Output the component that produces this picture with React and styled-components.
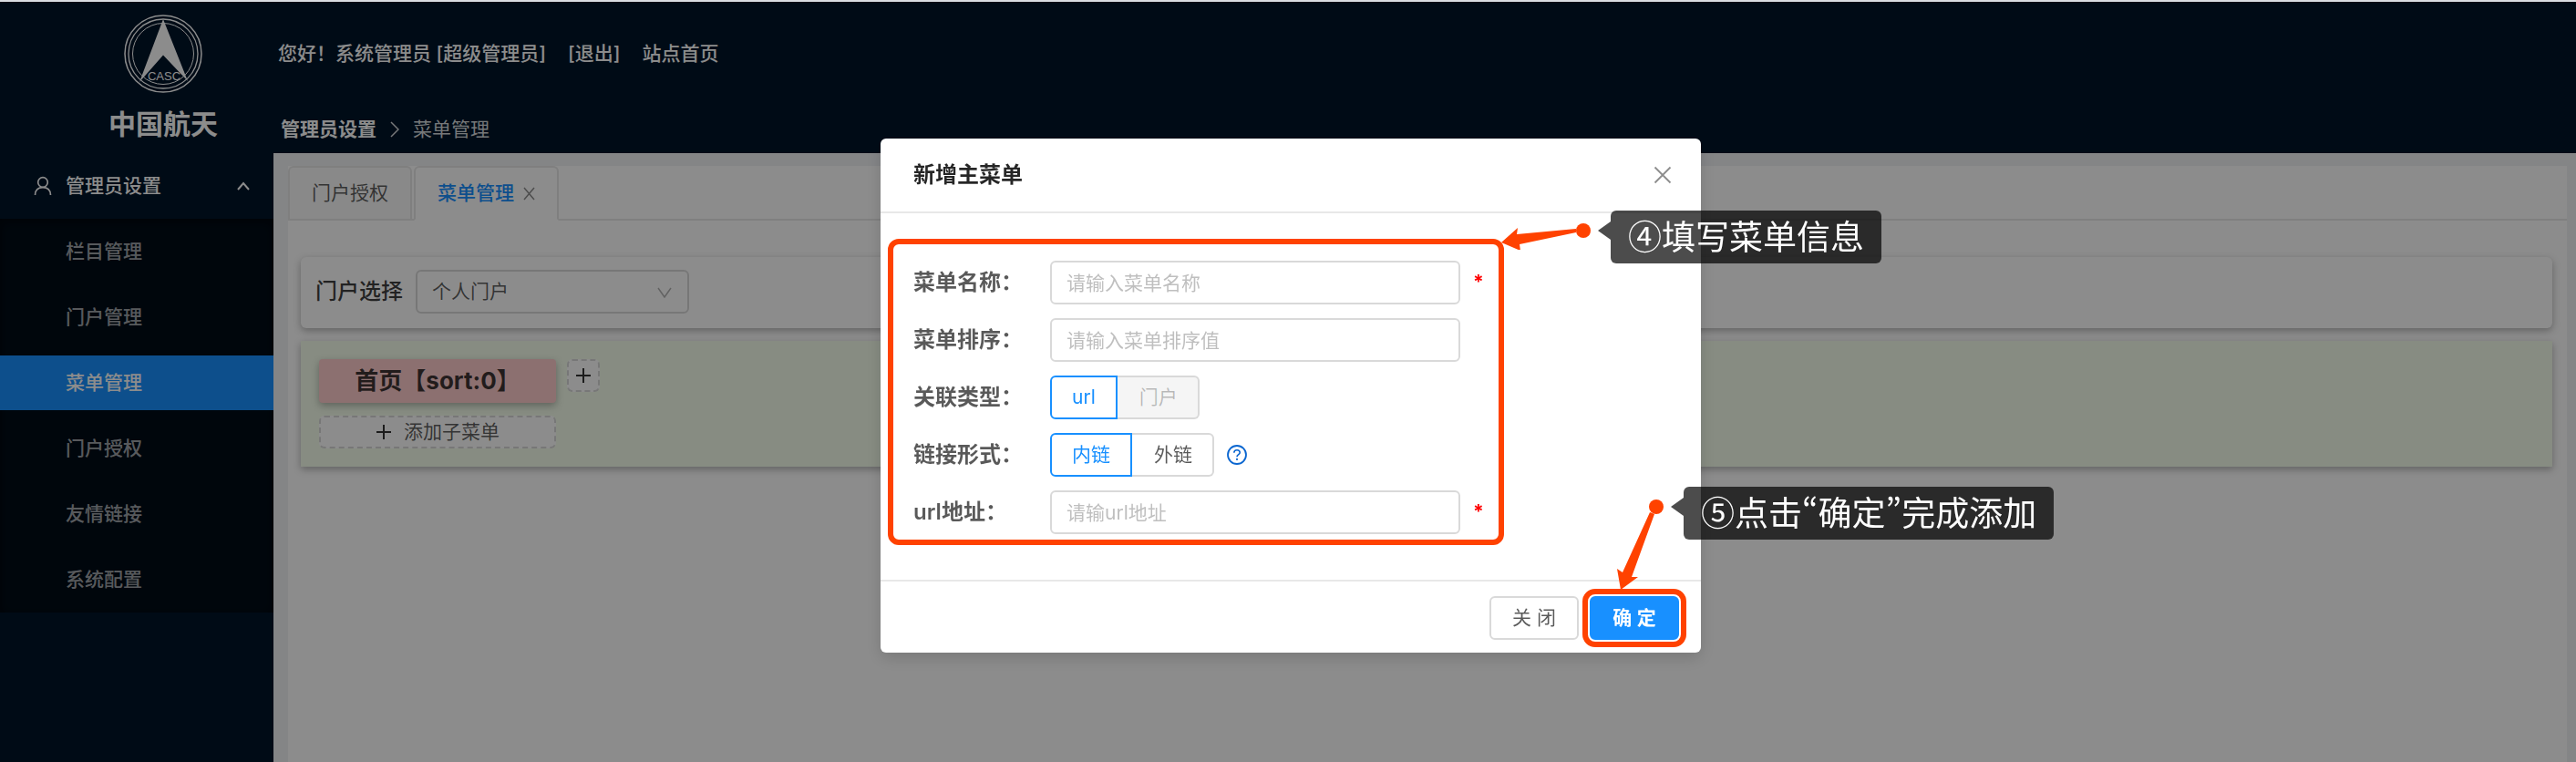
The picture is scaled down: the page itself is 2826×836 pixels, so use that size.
import React, { useState } from 'react';
import styled, { createGlobalStyle, css } from 'styled-components';

const GlobalStyle = createGlobalStyle`
  * { box-sizing: border-box; }
  body {
    margin: 0;
    background: #f0f2f5;
    color: rgba(0, 0, 0, 0.65);
    font-family: Inter, "Noto Sans CJK SC", sans-serif;
    font-size: 21px;
    line-height: 30px;
  }
  button, input, select { font: inherit; color: inherit; margin: 0; }
  a { color: inherit; text-decoration: none; }
`;

/* ---------- page frame ---------- */

const Page = styled.div`
  display: flex;
  min-height: 100vh;
  border-top: 2px solid #dadde2;
`;

const Sidebar = styled.aside`
  flex: 0 0 300px;
  background: #001529;
  color: #fff;
`;

const Brand = styled.div`
  display: flex;
  flex-direction: column;
  align-items: center;
  gap: 16px;
  padding: 14px 0 14px 58px;
`;

const BrandName = styled.h1`
  margin: 0;
  font-size: 30px;
  line-height: 36px;
  font-weight: 700;
`;

const MenuTitle = styled.button`
  display: flex;
  align-items: center;
  width: 100%;
  height: 72px;
  padding: 0 26px 0 37px;
  border: 0;
  background: none;
  color: #fff;
  font-weight: 500;
  text-align: left;
`;

const MenuText = styled.span`
  flex: 1;
  padding-left: 15px;
`;

const SubMenu = styled.ul`
  display: flex;
  flex-direction: column;
  gap: 12px;
  margin: 0;
  padding: 6px 0;
  list-style: none;
  background: #000c17;
  box-shadow: inset 0 3px 12px rgba(0, 0, 0, 0.45);
`;

const MenuLink = styled.a`
  display: block;
  padding-left: 72px;
  line-height: 60px;
  font-weight: 500;
  color: ${(p) => (p.$active ? '#fff' : 'rgba(255, 255, 255, 0.65)')};
  background: ${(p) => (p.$active ? '#1890ff' : 'none')};
`;

const Main = styled.main`
  flex: 1;
  min-width: 0;
  display: flex;
  flex-direction: column;
`;

const Header = styled.header`
  background: #001529;
  color: #fff;
  padding: 42px 5px 11px;
`;

const UserBar = styled.div`
  display: flex;
  gap: 24px;
  font-weight: 500;
  margin-bottom: 53px;
`;

const Breadcrumb = styled.nav`
  display: flex;
  align-items: center;
  gap: 15px;
  padding-left: 3px;
  color: rgba(255, 255, 255, 0.85);
  strong { color: #fff; }
`;

const Content = styled.section`
  flex: 1;
  margin: 14px 10px 0 16px;
  background: #fff;
`;

/* ---------- tabs ---------- */

const TabBar = styled.div`
  display: flex;
  gap: 2px;
  height: 60px;
  box-shadow: inset 0 -2px #e8e8e8;
`;

const Tab = styled.button`
  display: flex;
  align-items: center;
  gap: 10px;
  padding: 0 24px;
  border: 2px solid #e8e8e8;
  border-radius: 6px 6px 0 0;
  background: #fafafa;
  ${(p) =>
    p.$active &&
    css`
      color: #1890ff;
      font-weight: 500;
      background: #fff;
      border-bottom-color: #fff;
    `}
`;

/* ---------- portal cards ---------- */

const Cards = styled.div`
  display: flex;
  flex-direction: column;
  gap: 14px;
  padding: 40px 16px 0 14px;
`;

const Card = styled.div`
  box-shadow: 0 3px 8px rgba(0, 0, 0, 0.3);
`;

const PortalCard = styled(Card)`
  display: flex;
  align-items: center;
  gap: 14px;
  padding: 14px 16px 16px;
  border-radius: 6px;
  background: #fff;
`;

const PortalLabel = styled.label`
  font-size: 24px;
  font-weight: 500;
  color: rgba(0, 0, 0, 0.75);
`;

const SelectBox = styled.div`
  position: relative;
  width: 300px;
  select {
    appearance: none;
    width: 100%;
    height: 48px;
    padding: 0 48px 0 16px;
    border: 2px solid #d9d9d9;
    border-radius: 6px;
    background: #fff;
  }
  svg {
    position: absolute;
    right: 19px;
    top: 19px;
    pointer-events: none;
  }
`;

const MenuCard = styled(Card)`
  display: flex;
  align-items: flex-start;
  gap: 12px;
  padding: 20px;
  background: #f6ffed;
`;

const MenuColumn = styled.div`
  display: flex;
  flex-direction: column;
  gap: 14px;
  width: 260px;
`;

const MainMenuButton = styled.button`
  height: 48px;
  border: 0;
  border-radius: 4px;
  background: #ffcccc;
  color: rgba(0, 0, 0, 0.75);
  font-size: 26px;
  font-weight: 700;
  box-shadow: 0 3px 8px rgba(0, 0, 0, 0.3);
`;

const DashedButton = styled.button`
  display: flex;
  align-items: center;
  justify-content: center;
  gap: 13px;
  min-width: 36px;
  height: 36px;
  padding: 0;
  border: 2px dashed #d9d9d9;
  border-radius: 6px;
  background: #fff;
`;

/* ---------- dialog ---------- */

const Mask = styled.div`
  position: fixed;
  inset: 2px 0 0;
  display: flex;
  align-items: flex-start;
  justify-content: center;
  padding: 150px 0 0 6px;
  background: rgba(0, 0, 0, 0.45);
`;

const Dialog = styled.div`
  position: relative;
  width: 900px;
  border-radius: 6px;
  background: #fff;
  box-shadow: 0 6px 18px rgba(0, 0, 0, 0.15);
`;

const DialogHeader = styled.div`
  display: flex;
  align-items: center;
  justify-content: space-between;
  height: 82px;
  padding: 0 32px 0 36px;
  border-bottom: 2px solid #e8e8e8;
`;

const DialogTitle = styled.h2`
  margin: 0;
  font-size: 24px;
  line-height: 36px;
  font-weight: 600;
  color: rgba(0, 0, 0, 0.85);
`;

const CloseButton = styled.button`
  display: flex;
  padding: 0;
  border: 0;
  background: none;
  color: rgba(0, 0, 0, 0.45);
`;

const DialogBody = styled.div`
  padding: 28px 216px 38px 8px;
`;

const Form = styled.form`
  display: flex;
  flex-direction: column;
  gap: 15px;
  padding: 18px 6px 6px 22px;
  border: 6px solid #ff4200;
  border-radius: 12px;
`;

const Field = styled.div`
  display: flex;
  align-items: center;
  height: 48px;
`;

const labelText = css`
  flex: 0 0 150px;
  font-size: 24px;
  font-weight: 600;
`;

const FieldLabel = styled.label`${labelText}`;
const GroupLabel = styled.span`${labelText}`;

const TextInput = styled.input`
  flex: 0 0 450px;
  height: 48px;
  padding: 0 16px;
  border: 2px solid #d9d9d9;
  border-radius: 6px;
  background: #fff;
  &::placeholder { color: #bfbfbf; opacity: 1; }
`;

const Required = styled.span`
  padding-left: 14px;
  color: #f00;
  font-weight: 700;
`;

const RadioGroup = styled.div`
  display: flex;
`;

const RadioButton = styled.label`
  position: relative;
  height: 48px;
  padding: 0 22px 0 24px;
  line-height: 44px;
  border: 2px solid #d9d9d9;
  border-left-width: 0;
  border-radius: 0 6px 6px 0;
  input { position: absolute; opacity: 0; margin: 0; }
  &:first-child { padding-left: 22px; border-left-width: 2px; border-radius: 6px 0 0 6px; }
  &:has(input:checked) { border-color: #1890ff; color: #1890ff; }
  &:has(input:disabled) { background: #f5f5f5; color: rgba(0, 0, 0, 0.25); }
`;

const HelpButton = styled.button`
  display: flex;
  margin-left: 14px;
  padding: 0;
  border: 0;
  background: none;
  color: #0b66d0;
`;

const DialogFooter = styled.div`
  display: flex;
  justify-content: flex-end;
  gap: 12px;
  padding: 16px 24px 14px;
  border-top: 2px solid #e8e8e8;
`;

const FooterButton = styled.button`
  width: 98px;
  height: 48px;
  padding: 0;
  border: 2px solid ${(p) => (p.$primary ? '#1890ff' : '#d9d9d9')};
  border-radius: 6px;
  background: ${(p) => (p.$primary ? '#1890ff' : '#fff')};
  color: ${(p) => (p.$primary ? '#fff' : 'inherit')};
  font-weight: ${(p) => (p.$primary ? 600 : 400)};
  ${(p) =>
    p.$primary &&
    css`
      outline: 6px solid #ff4200;
      outline-offset: 2px;
    `}
`;

/* ---------- guide notes over the dialog ---------- */

const GuideArrow = styled.svg`
  position: absolute;
  left: ${(p) => p.$left}px;
  top: ${(p) => p.$top}px;
  fill: #ff4200;
  pointer-events: none;
`;

const GuideNote = styled.div`
  position: absolute;
  left: ${(p) => p.$left}px;
  top: ${(p) => p.$top}px;
  padding: 0 19px 4px;
  border-radius: 6px;
  background: rgba(0, 0, 0, 0.7);
  color: #fff;
  font-family: "Noto Sans CJK SC", sans-serif;
  font-variant-east-asian: proportional-width;
  font-size: 37px;
  line-height: 54px;
  white-space: nowrap;
  &::before {
    content: '';
    position: absolute;
    right: 100%;
    top: 12px;
    border: 10px solid transparent;
    border-left-width: 0;
    border-right: 14px solid rgba(0, 0, 0, 0.7);
  }
`;

/* ---------- icons ---------- */

const Logo = () => (
  <svg width="86" height="86" viewBox="0 0 86 86" fill="none" stroke="#fff">
    <circle cx="43" cy="43" r="42" strokeWidth="1.5" />
    <circle cx="43" cy="43" r="38" strokeWidth="1.3" />
    <circle cx="43" cy="43" r="33.5" strokeWidth="1" />
    <path d="M43 5 L70 73 L43 44.5 L17 74 Z" fill="#fff" stroke="none" />
    <text x="44" y="72" textAnchor="middle" fontSize="13" fill="#fff" stroke="none" fontFamily="Liberation Sans, sans-serif">
      CASC
    </text>
  </svg>
);

const UserIcon = () => (
  <svg width="20" height="22" viewBox="0 0 20 22" fill="none" stroke="currentColor" strokeWidth="1.7">
    <circle cx="10" cy="7" r="5.3" />
    <path d="M1.5 21 C1.5 15.5 5 12.6 10 12.6 C15 12.6 18.5 15.5 18.5 21" />
  </svg>
);

const Lines = ({ w, h, d, stroke = 2, color = 'currentColor' }) => (
  <svg width={w} height={h} viewBox={`0 0 ${w} ${h}`} fill="none" stroke={color} strokeWidth={stroke}>
    <path d={d} />
  </svg>
);

const PlusIcon = () => <Lines w={18} h={18} d="M9 1 V17 M1 9 H17" color="rgba(0,0,0,0.8)" />;
const CloseIcon = () => <Lines w={20} h={20} d="M1.5 1.5 L18.5 18.5 M18.5 1.5 L1.5 18.5" stroke={1.8} />;

const HelpIcon = () => (
  <svg width="22" height="22" viewBox="0 0 22 22" fill="none" stroke="currentColor" strokeWidth="1.8">
    <circle cx="11" cy="11" r="10" />
    <path d="M7.8 8.8 C7.8 6.8 9.2 5.7 11 5.7 C12.8 5.7 14.2 6.9 14.2 8.5 C14.2 10.6 11 10.8 11 13.3" strokeWidth="1.6" />
    <circle cx="11" cy="15.9" r="1.1" fill="currentColor" stroke="none" />
  </svg>
);

/* ---------- app ---------- */

const MENU = ['栏目管理', '门户管理', '菜单管理', '门户授权', '友情链接', '系统配置'];

export default function App() {
  const [kind, setKind] = useState('url');
  const [link, setLink] = useState('inner');

  return (
    <>
      <GlobalStyle />
      <Page>
        <Sidebar>
          <Brand>
            <Logo />
            <BrandName>中国航天</BrandName>
          </Brand>
          <MenuTitle type="button">
            <UserIcon />
            <MenuText>管理员设置</MenuText>
            <Lines w={14} h={10} d="M1 9 L7 2 L13 9" />
          </MenuTitle>
          <SubMenu>
            {MENU.map((name) => (
              <li key={name}>
                <MenuLink href="#" $active={name === '菜单管理'}>{name}</MenuLink>
              </li>
            ))}
          </SubMenu>
        </Sidebar>

        <Main>
          <Header>
            <UserBar>
              <span>您好！系统管理员 [超级管理员]</span>
              <a href="#">[退出]</a>
              <a href="#">站点首页</a>
            </UserBar>
            <Breadcrumb>
              <strong>管理员设置</strong>
              <Lines w={10} h={18} d="M1 1 L9 9 L1 17" stroke={1.5} />
              <span>菜单管理</span>
            </Breadcrumb>
          </Header>

          <Content>
            <TabBar>
              <Tab type="button">门户授权</Tab>
              <Tab type="button" $active>
                菜单管理
                <Lines w={13} h={15} d="M1 1 L12 14 M12 1 L1 14" stroke={1.5} color="rgba(0,0,0,0.45)" />
              </Tab>
            </TabBar>
            <Cards>
              <PortalCard>
                <PortalLabel htmlFor="portal">门户选择</PortalLabel>
                <SelectBox>
                  <select id="portal">
                    <option>个人门户</option>
                  </select>
                  <Lines w={16} h={12} d="M1 1 L8 11 L15 1" stroke={1.5} color="rgba(0,0,0,0.3)" />
                </SelectBox>
              </PortalCard>
              <MenuCard>
                <MenuColumn>
                  <MainMenuButton type="button">首页【sort:0】</MainMenuButton>
                  <DashedButton type="button">
                    <PlusIcon />
                    添加子菜单
                  </DashedButton>
                </MenuColumn>
                <DashedButton type="button" aria-label="新增主菜单">
                  <PlusIcon />
                </DashedButton>
              </MenuCard>
            </Cards>
          </Content>
        </Main>
      </Page>

      <Mask>
        <Dialog role="dialog" aria-labelledby="dialog-title">
          <DialogHeader>
            <DialogTitle id="dialog-title">新增主菜单</DialogTitle>
            <CloseButton type="button" aria-label="关闭">
              <CloseIcon />
            </CloseButton>
          </DialogHeader>
          <DialogBody>
            <Form>
              <Field>
                <FieldLabel htmlFor="name">菜单名称：</FieldLabel>
                <TextInput id="name" placeholder="请输入菜单名称" />
                <Required>*</Required>
              </Field>
              <Field>
                <FieldLabel htmlFor="sort">菜单排序：</FieldLabel>
                <TextInput id="sort" placeholder="请输入菜单排序值" />
              </Field>
              <Field>
                <GroupLabel id="kind-label">关联类型：</GroupLabel>
                <RadioGroup role="radiogroup" aria-labelledby="kind-label">
                  <RadioButton>
                    <input type="radio" name="kind" checked={kind === 'url'} onChange={() => setKind('url')} />
                    url
                  </RadioButton>
                  <RadioButton>
                    <input type="radio" name="kind" disabled />
                    门户
                  </RadioButton>
                </RadioGroup>
              </Field>
              <Field>
                <GroupLabel id="link-label">链接形式：</GroupLabel>
                <RadioGroup role="radiogroup" aria-labelledby="link-label">
                  <RadioButton>
                    <input type="radio" name="link" checked={link === 'inner'} onChange={() => setLink('inner')} />
                    内链
                  </RadioButton>
                  <RadioButton>
                    <input type="radio" name="link" checked={link === 'outer'} onChange={() => setLink('outer')} />
                    外链
                  </RadioButton>
                </RadioGroup>
                <HelpButton type="button" aria-label="帮助">
                  <HelpIcon />
                </HelpButton>
              </Field>
              <Field>
                <FieldLabel htmlFor="url">url地址：</FieldLabel>
                <TextInput id="url" placeholder="请输url地址" />
                <Required>*</Required>
              </Field>
            </Form>
          </DialogBody>
          <DialogFooter>
            <FooterButton type="button">关 闭</FooterButton>
            <FooterButton type="button" $primary>确 定</FooterButton>
          </DialogFooter>

          <GuideArrow width="100" height="30" viewBox="0 -4 100 30" $left={681} $top={92}>
            <path d="M0 18 L18 2 L17 9 L82 3 L82 7 L20 20 L21 27 Z" />
            <circle cx="90" cy="5" r="8" />
          </GuideArrow>
          <GuideNote $left={801} $top={79}>④填写菜单信息</GuideNote>

          <GuideArrow width="54" height="102" viewBox="0 0 54 102" $left={806} $top={394}>
            <path d="M6 101 L2 78 L8 82 L38 16 L43 18 L18 87 L25 87 Z" />
            <circle cx="45" cy="10" r="8" />
          </GuideArrow>
          <GuideNote $left={881} $top={382}>⑤点击“确定”完成添加</GuideNote>
        </Dialog>
      </Mask>
    </>
  );
}
